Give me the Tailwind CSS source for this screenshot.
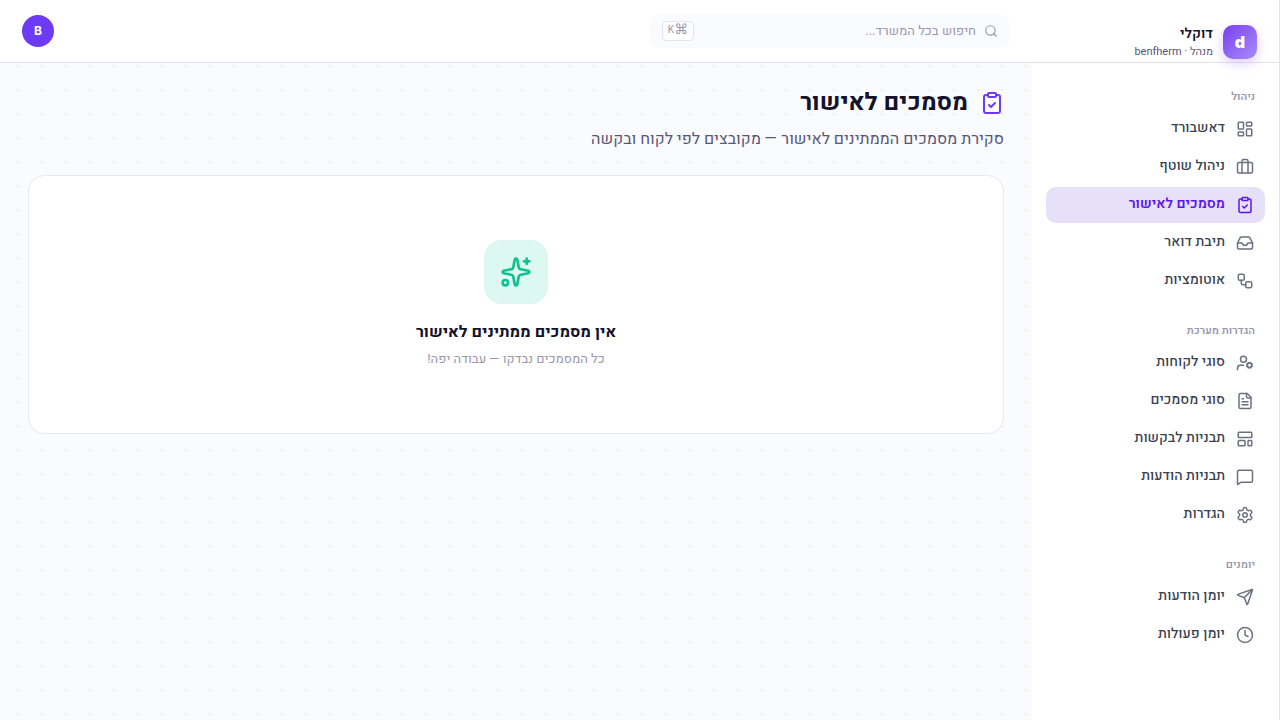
<!DOCTYPE html>
<html lang="he" dir="rtl">
<head>
    <meta charset="UTF-8">
    <meta name="viewport" content="width=device-width, initial-scale=1.0">
    <title>דוקלי - מסמכים לאישור</title>
    <script src="https://cdn.jsdelivr.net/npm/@tailwindcss/browser@4"></script>
    <style>
        body { font-family: Heebo, Roboto, 'Open Sans', sans-serif; }
        .dots {
            background-image: radial-gradient(circle, #e9e9f0 1px, transparent 1px);
            background-size: 24px 24px;
            background-position: 6px -9px;
        }
        svg { fill: none; stroke: currentColor; stroke-linecap: round; stroke-linejoin: round; flex-shrink: 0; }
        nav svg { width: 18px; height: 18px; stroke-width: 2; }
    </style>
</head>
<body class="flex min-h-screen bg-[#fafbff] text-[#14122b]">
    <!-- Sidebar -->
    <aside class="w-62 shrink-0 bg-white border-r border-[#e5e3ef]">
        <div class="flex h-[63px] gap-2.5 border-b border-[#e5e3ef] px-[22px] pt-[25px]">
            <div class="flex size-[34px] shrink-0 items-center justify-center rounded-[10px] bg-linear-to-br from-[#7c3aed] to-[#a78bfa] font-['Inter'] text-base font-black text-white shadow-[0_4px_12px_rgba(124,58,237,0.25)]">d</div>
            <div>
                <div class="text-sm leading-[18px] font-semibold">דוקלי</div>
                <div class="text-[11px] leading-[18px] text-[#5b5675]">מנהל · benfherm</div>
            </div>
        </div>

        <nav class="flex flex-col gap-6 px-3.5 pt-[26px] text-sm font-medium text-[#374151]">
            <section>
                <h2 class="mb-1.5 px-2.5 text-[11px] leading-4 font-semibold text-[#9a98ac]">ניהול</h2>
                <div class="flex flex-col gap-0.5">
                    <a href="#" class="flex h-9 items-center gap-[11px] rounded-[10px] px-[11px]">
                        <svg class="text-[#6b7280]" viewBox="0 0 24 24"><rect width="7" height="9" x="3" y="3" rx="1"/><rect width="7" height="5" x="14" y="3" rx="1"/><rect width="7" height="9" x="14" y="12" rx="1"/><rect width="7" height="5" x="3" y="16" rx="1"/></svg>
                        <span class="pb-0.5">דאשבורד</span>
                    </a>
                    <a href="#" class="flex h-9 items-center gap-[11px] rounded-[10px] px-[11px]">
                        <svg class="text-[#6b7280]" viewBox="0 0 24 24"><path d="M16 20V4a2 2 0 0 0-2-2h-4a2 2 0 0 0-2 2v16"/><rect width="20" height="14" x="2" y="6" rx="2"/></svg>
                        <span class="pb-0.5">ניהול שוטף</span>
                    </a>
                    <a href="#" class="flex h-9 items-center gap-[11px] rounded-[10px] bg-[#e6e0f9] px-[11px] font-semibold text-[#5b16ec]">
                        <svg viewBox="0 0 24 24"><rect width="8" height="4" x="8" y="2" rx="1" ry="1"/><path d="M16 4h2a2 2 0 0 1 2 2v14a2 2 0 0 1-2 2H6a2 2 0 0 1-2-2V6a2 2 0 0 1 2-2h2"/><path d="m9 14 2 2 4-4"/></svg>
                        <span class="pb-0.5">מסמכים לאישור</span>
                    </a>
                    <a href="#" class="flex h-9 items-center gap-[11px] rounded-[10px] px-[11px]">
                        <svg class="text-[#6b7280]" viewBox="0 0 24 24"><path d="M22 12h-6l-2 3h-4l-2-3H2"/><path d="M5.45 5.11 2 12v6a2 2 0 0 0 2 2h16a2 2 0 0 0 2-2v-6l-3.45-6.89A2 2 0 0 0 16.76 4H7.24a2 2 0 0 0-1.79 1.11z"/></svg>
                        <span class="pb-0.5">תיבת דואר</span>
                    </a>
                    <a href="#" class="flex h-9 items-center gap-[11px] rounded-[10px] px-[11px]">
                        <svg class="text-[#6b7280]" viewBox="0 0 24 24"><rect width="8" height="8" x="3" y="3" rx="2"/><path d="M7 11v4a2 2 0 0 0 2 2h4"/><rect width="8" height="8" x="13" y="13" rx="2"/></svg>
                        <span class="pb-0.5">אוטומציות</span>
                    </a>
                </div>
            </section>

            <section>
                <h2 class="mb-1.5 px-2.5 text-[11px] leading-4 font-semibold text-[#9a98ac]">הגדרות מערכת</h2>
                <div class="flex flex-col gap-0.5">
                    <a href="#" class="flex h-9 items-center gap-[11px] rounded-[10px] px-[11px]">
                        <svg class="text-[#6b7280]" viewBox="0 0 24 24"><path d="M10 15H6a4 4 0 0 0-4 4v2"/><circle cx="10" cy="7" r="4"/><circle cx="18" cy="15" r="3"/><path d="m14.305 16.53.923-.382M15.228 13.852l-.923-.383M16.852 12.228l-.383-.923M16.852 17.772l-.383.924M19.148 12.228l.383-.923M19.53 18.696l-.382-.924M20.772 13.852l.924-.383M20.772 16.148l.924.383"/></svg>
                        <span class="pb-0.5">סוגי לקוחות</span>
                    </a>
                    <a href="#" class="flex h-9 items-center gap-[11px] rounded-[10px] px-[11px]">
                        <svg class="text-[#6b7280]" viewBox="0 0 24 24"><path d="M15 2H6a2 2 0 0 0-2 2v16a2 2 0 0 0 2 2h12a2 2 0 0 0 2-2V7Z"/><path d="M14 2v4a2 2 0 0 0 2 2h4M10 9H8M16 13H8M16 17H8"/></svg>
                        <span class="pb-0.5">סוגי מסמכים</span>
                    </a>
                    <a href="#" class="flex h-9 items-center gap-[11px] rounded-[10px] px-[11px]">
                        <svg class="text-[#6b7280]" viewBox="0 0 24 24"><rect width="18" height="7" x="3" y="3" rx="1"/><rect width="9" height="7" x="3" y="14" rx="1"/><rect width="5" height="7" x="16" y="14" rx="1"/></svg>
                        <span class="pb-0.5">תבניות לבקשות</span>
                    </a>
                    <a href="#" class="flex h-9 items-center gap-[11px] rounded-[10px] px-[11px]">
                        <svg class="text-[#6b7280]" viewBox="0 0 24 24"><path d="M22 17a2 2 0 0 1-2 2H6.828a2 2 0 0 0-1.414.586l-2.202 2.202A.71.71 0 0 1 2 21.286V5a2 2 0 0 1 2-2h16a2 2 0 0 1 2 2z"/></svg>
                        <span class="pb-0.5">תבניות הודעות</span>
                    </a>
                    <a href="#" class="flex h-9 items-center gap-[11px] rounded-[10px] px-[11px]">
                        <svg class="text-[#6b7280]" viewBox="0 0 24 24"><path d="M9.671 4.136a2.34 2.34 0 0 1 4.659 0 2.34 2.34 0 0 0 3.319 1.915 2.34 2.34 0 0 1 2.33 4.033 2.34 2.34 0 0 0 0 3.831 2.34 2.34 0 0 1-2.33 4.033 2.34 2.34 0 0 0-3.319 1.915 2.34 2.34 0 0 1-4.659 0 2.34 2.34 0 0 0-3.32-1.915 2.34 2.34 0 0 1-2.33-4.033 2.34 2.34 0 0 0 0-3.831A2.34 2.34 0 0 1 6.35 6.051a2.34 2.34 0 0 0 3.319-1.915"/><circle cx="12" cy="12" r="3"/></svg>
                        <span class="pb-0.5">הגדרות</span>
                    </a>
                </div>
            </section>

            <section>
                <h2 class="mb-1.5 px-2.5 text-[11px] leading-4 font-semibold text-[#9a98ac]">יומנים</h2>
                <div class="flex flex-col gap-0.5">
                    <a href="#" class="flex h-9 items-center gap-[11px] rounded-[10px] px-[11px]">
                        <svg class="text-[#6b7280]" viewBox="0 0 24 24"><path d="M14.536 21.686a.5.5 0 0 0 .937-.024l6.5-19a.496.496 0 0 0-.635-.635l-19 6.5a.5.5 0 0 0-.024.937l7.93 3.18a2 2 0 0 1 1.112 1.11z"/><path d="m21.854 2.147-10.94 10.939"/></svg>
                        <span class="pb-0.5">יומן הודעות</span>
                    </a>
                    <a href="#" class="flex h-9 items-center gap-[11px] rounded-[10px] px-[11px]">
                        <svg class="text-[#6b7280]" viewBox="0 0 24 24"><circle cx="12" cy="12" r="10"/><path d="M12 6v6l4 2"/></svg>
                        <span class="pb-0.5">יומן פעולות</span>
                    </a>
                </div>
            </section>
        </nav>
    </aside>

    <div class="flex min-w-0 flex-1 flex-col">
        <!-- Top bar -->
        <header class="flex h-[63px] items-center justify-between border-b border-[#e5e3ef] bg-white px-[22px]">
            <div class="flex h-[34px] w-[360px] items-center gap-2 rounded-[10px] bg-[#fafbff] px-3 text-[#9a98ac]">
                <svg class="size-3.5" viewBox="0 0 24 24" stroke-width="2"><circle cx="11" cy="11" r="8"/><path d="m21 21-4.3-4.3"/></svg>
                <input type="text" aria-label="חיפוש" placeholder="חיפוש בכל המשרד..." class="min-w-0 flex-1 bg-transparent text-[13px] outline-none placeholder:text-[#9a98ac]">
                <kbd class="flex h-5 w-8 items-center justify-center rounded-sm border border-[#e5e3ef] bg-white pb-1 font-[Roboto,'DejaVu_Sans',sans-serif] text-[10px]"><span class="text-sm">⌘</span>K</kbd>
            </div>
            <button class="size-8 rounded-full bg-[#6d3bf5] font-['Inter'] text-xs font-bold text-white">B</button>
        </header>

        <main class="dots flex-1 px-7 pt-6">
            <h1 class="flex items-center gap-3 text-2xl leading-8 font-bold">
                <svg class="size-6 text-[#6d3bf5]" viewBox="0 0 24 24" stroke-width="2"><rect width="8" height="4" x="8" y="2" rx="1" ry="1"/><path d="M16 4h2a2 2 0 0 1 2 2v14a2 2 0 0 1-2 2H6a2 2 0 0 1-2-2V6a2 2 0 0 1 2-2h2"/><path d="m9 14 2 2 4-4"/></svg>
                מסמכים לאישור
            </h1>
            <p class="mt-2 text-base leading-6 text-[#5b5675]">סקירת מסמכים הממתינים לאישור — מקובצים לפי לקוח ובקשה</p>

            <div class="mt-6 flex flex-col items-center rounded-2xl border border-[#e9e7f3] bg-white py-16">
                <div class="flex size-16 items-center justify-center rounded-[18px] bg-[#dcf8f0] text-[#10c193]">
                    <svg class="size-8" viewBox="0 0 24 24" stroke-width="2"><path d="M11.017 2.814a1 1 0 0 1 1.966 0l1.051 5.558a2 2 0 0 0 1.594 1.594l5.558 1.051a1 1 0 0 1 0 1.966l-5.558 1.051a2 2 0 0 0-1.594 1.594l-1.051 5.558a1 1 0 0 1-1.966 0l-1.051-5.558a2 2 0 0 0-1.594-1.594l-5.558-1.051a1 1 0 0 1 0-1.966l5.558-1.051a2 2 0 0 0 1.594-1.594z"/><path d="M20 2v4M22 4h-4"/><circle cx="4" cy="20" r="2"/></svg>
                </div>
                <h3 class="mt-4 text-base leading-6 font-bold">אין מסמכים ממתינים לאישור</h3>
                <p class="mt-[5px] text-[13px] leading-5 text-[#9a98ac]">כל המסמכים נבדקו — עבודה יפה!</p>
            </div>
        </main>
    </div>
</body>
</html>
